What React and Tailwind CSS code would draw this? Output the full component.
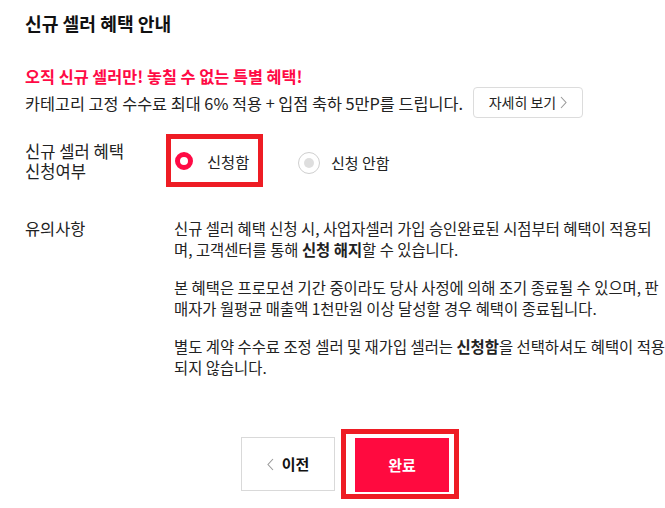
import React from "react";

function Chevron({ dir = "right", className = "" }) {
  const pts = dir === "right" ? "1,1 6,6.5 1,12" : "6,1 1,6.5 6,12";
  return (
    <svg width="7" height="13" viewBox="0 0 7 13" className={className}>
      <polyline points={pts} fill="none" stroke="#9a9a9a" strokeWidth="1.1" />
    </svg>
  );
}

export default function App() {
  return (
    <div className="w-[665px] h-[508px] overflow-hidden bg-white text-[#222] font-['Noto_Sans_CJK_KR','Noto_Sans',sans-serif] pl-[25px]">
      <div className="pt-[12px] text-[18.2px] leading-[22px] font-bold text-[#111]">신규 셀러 혜택 안내</div>

      <div className="mt-[31px] text-[16.3px] leading-[22px] font-bold text-[#ff0a45] whitespace-nowrap">
        오직 신규 셀러만! 놓칠 수 없는 특별 혜택!
      </div>

      <div className="mt-[0px] flex items-center h-[31px]">
        <span className="text-[16.3px] leading-[22px] whitespace-nowrap">
          카테고리 고정 수수료 최대 6% 적용 + 입점 축하 5만P를 드립니다.
        </span>
        <button className="ml-[10px] w-[110px] h-[31px] shrink-0 border border-[#dcdcdc] rounded-[4px] bg-white flex items-center justify-center gap-[4px] text-[14px] text-[#222]">
          <span>자세히 보기</span>
          <Chevron dir="right" />
        </button>
      </div>

      <div className="mt-[16px] flex items-start">
        <div className="w-[141px] shrink-0 pt-[8px] text-[16.6px] whitespace-nowrap flex flex-col gap-[1px]">
          <span className="block leading-[19px]">신규 셀러 혜택</span>
          <span className="block leading-[19px]">신청여부</span>
        </div>
        <div className="w-[97px] h-[53px] shrink-0 border-[5px] border-[#ee1c24] flex items-center pl-[4px]">
          <span className="w-[18px] h-[18px] rounded-full border-[5px] border-[#ff0a45] bg-white" />
          <span className="ml-[14px] text-[15.3px] leading-[20px] whitespace-nowrap">신청함</span>
        </div>
        <div className="h-[53px] flex items-center ml-[35px] pt-[4px]">
          <span className="w-[22px] h-[22px] rounded-full border border-[#cfcfcf] bg-white flex items-center justify-center">
            <span className="w-[10px] h-[10px] rounded-full bg-[#dedede]" />
          </span>
          <span className="ml-[11px] text-[15px] leading-[20px] whitespace-nowrap">신청 안함</span>
        </div>
      </div>

      <div className="mt-[31px] flex items-start">
        <div className="w-[149px] shrink-0 text-[16.4px] leading-[20px]">유의사항</div>
        <div className="text-[15.4px] leading-[21px] whitespace-nowrap text-[#222]">
          <p>
            신규 셀러 혜택 신청 시, 사업자셀러 가입 승인완료된 시점부터 혜택이 적용되
            <br />
            며, 고객센터를 통해 <b className="font-bold">신청 해지</b>할 수 있습니다.
          </p>
          <p className="mt-[17px]">
            본 혜택은 프로모션 기간 중이라도 당사 사정에 의해 조기 종료될 수 있으며, 판
            <br />
            매자가 월평균 매출액 1천만원 이상 달성할 경우 혜택이 종료됩니다.
          </p>
          <p className="mt-[17px]">
            별도 계약 수수료 조정 셀러 및 재가입 셀러는 <b className="font-bold">신청함</b>을 선택하셔도 혜택이 적용
            <br />
            되지 않습니다.
          </p>
        </div>
      </div>

      <div className="mt-[51px] flex items-center ml-[216px]">
        <button className="w-[94px] h-[54px] border border-[#d9d9d9] bg-white flex items-center justify-center gap-[8px] text-[15px] font-bold text-[#111]">
          <Chevron dir="left" />
          <span>이전</span>
        </button>
        <div className="ml-[6px] w-[118px] h-[70px] border-[5px] border-[#ee1c24] pl-[9px] pt-[4px]">
          <button className="w-[94px] h-[54px] bg-[#ff0a3f] text-white text-[15px] font-bold flex items-center justify-center">
            완료
          </button>
        </div>
      </div>
    </div>
  );
}
